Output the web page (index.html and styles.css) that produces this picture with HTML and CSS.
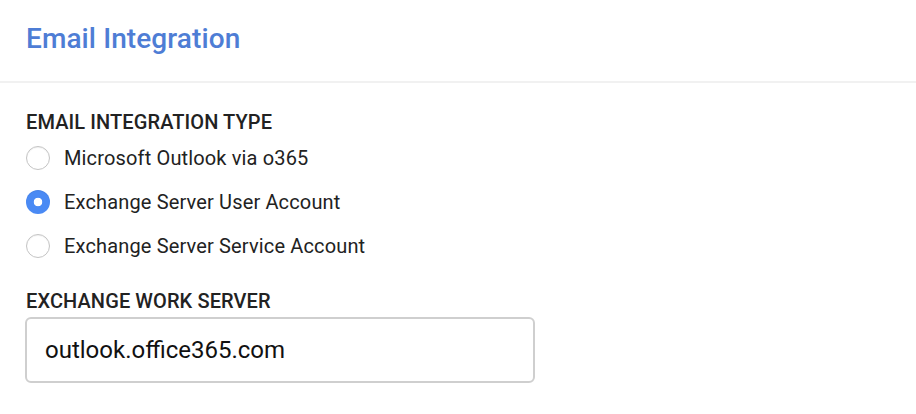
FILE: index.html
```html
<!DOCTYPE html>
<html>
<head>
<meta charset="utf-8">
<link rel="stylesheet" href="styles.css">
</head>
<body>
<div class="panel">
  <header class="header">
    <h1 class="title">Email Integration</h1>
  </header>
  <section class="body">
    <div class="field">
      <div class="label">EMAIL INTEGRATION TYPE</div>
      <div class="radios">
        <label class="radio"><span class="dot"></span><span class="radio-text">Microsoft Outlook via o365</span></label>
        <label class="radio"><span class="dot checked"></span><span class="radio-text">Exchange Server User Account</span></label>
        <label class="radio"><span class="dot"></span><span class="radio-text">Exchange Server Service Account</span></label>
      </div>
    </div>
    <div class="field field-server">
      <div class="label">EXCHANGE WORK SERVER</div>
      <div class="input">outlook.office365.com</div>
    </div>
  </section>
</div>
</body>
</html>
```
FILE: styles.css
```css
html, body {
  margin: 0;
  padding: 0;
  background: #fff;
}
body {
  font-family: Roboto, "Liberation Sans", sans-serif;
  color: #222;
}
.header {
  height: 81px;
  border-bottom: 2px solid #f1f1f1;
  padding-left: 26px;
  display: flex;
  align-items: center;
}
.title {
  margin: 0;
  font-size: 28px;
  font-weight: 500;
  letter-spacing: 0.1px;
  color: #4e7dd5;
  line-height: 1;
  padding-bottom: 3px;
}
.body {
  padding: 28px 26px 0 26px;
}
.label {
  font-size: 20px;
  font-weight: 500;
  line-height: 22px;
  letter-spacing: 0.1px;
  color: #222;
}
.radios {
  display: flex;
  flex-direction: column;
  gap: 20px;
  margin-top: 13px;
}
.radio {
  display: flex;
  align-items: center;
  height: 24px;
}
.dot {
  box-sizing: border-box;
  width: 24px;
  height: 24px;
  border-radius: 50%;
  border: 1px solid #c4c4c4;
  background: #fff;
  margin-right: 14px;
  flex: none;
  box-shadow: inset 0 1px 1px rgba(0,0,0,0.06);
}
.dot.checked {
  border: none;
  background: radial-gradient(circle, #fff 0 4px, #4a8af4 4.6px);
}
.radio-text {
  font-size: 20px;
  line-height: 24px;
  letter-spacing: 0.15px;
  color: #222;
}
.field-server {
  margin-top: 32px;
}
.input {
  box-sizing: border-box;
  width: 510px;
  height: 66px;
  margin-top: 5px;
  margin-left: -1px;
  border: 2px solid #cfcfcf;
  border-radius: 6px;
  padding-left: 18px;
  display: flex;
  align-items: center;
  font-size: 24px;
  color: #111;
}
```
